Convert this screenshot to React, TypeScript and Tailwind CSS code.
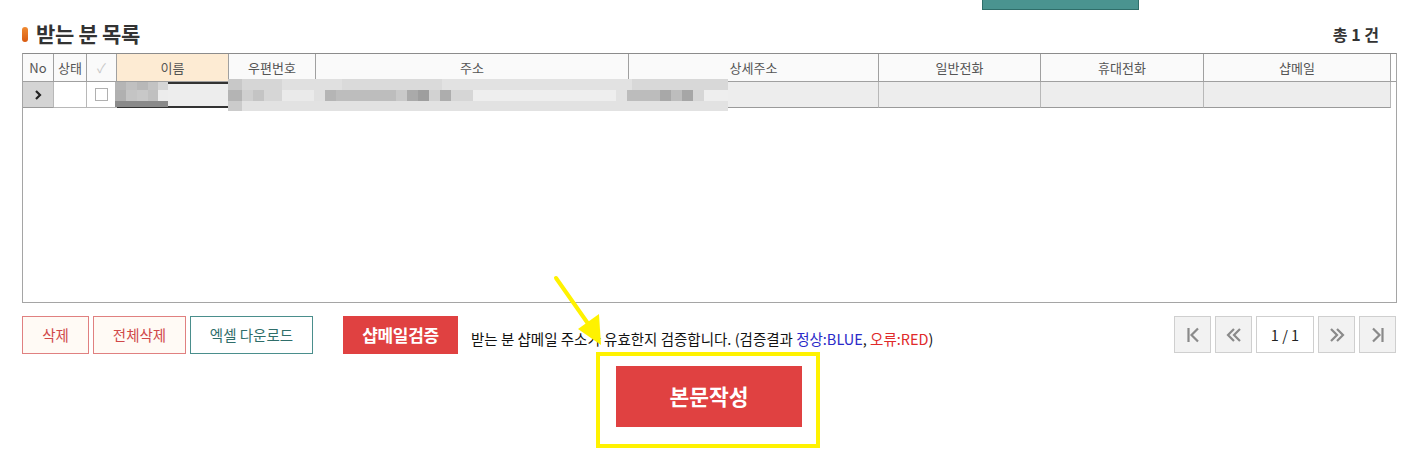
import React from "react";

const cols = [
  { w: 31, label: "No" },
  { w: 33, label: "상태" },
  { w: 30, label: "✓" },
  { w: 112, label: "이름" },
  { w: 87, label: "우편번호" },
  { w: 313, label: "주소" },
  { w: 250, label: "상세주소" },
  { w: 162, label: "일반전화" },
  { w: 163, label: "휴대전화" },
  { w: 187, label: "샵메일" },
];

function PagerBtn({ children, w = 37 }: { children: React.ReactNode; w?: number }) {
  return (
    <div
      className="h-[37px] flex items-center justify-center border border-[#cfcfcf] bg-[#f2f2f2] text-[#8a8a8a]"
      style={{ width: w }}
    >
      {children}
    </div>
  );
}

export default function App() {
  const font = { fontFamily: '"Noto Sans CJK KR", "Noto Sans", sans-serif' };
  return (
    <div className="relative w-[1426px] h-[459px] bg-white overflow-hidden" style={font}>
      {/* top partial teal button */}
      <div className="pl-[982px] h-[10px]">
        <div className="w-[157px] h-[10px] bg-[#4a9490] border border-t-0 border-[#2f6e6a]" />
      </div>

      <div className="pl-[22px] w-[1397px]">
        {/* title row */}
        <div className="h-[43px] flex items-center justify-between">
          <div className="flex items-center gap-[8px] pt-[5px]">
            <div className="w-[6px] h-[15px] rounded-full bg-gradient-to-b from-[#f08a30] to-[#d85a10]" />
            <span className="text-[21px] font-bold text-[#333] tracking-[-0.3px]">받는 분 목록</span>
          </div>
          <div className="pr-[18px] pt-[5px] text-[16px] font-bold text-[#333]">총 1 건</div>
        </div>

        {/* grid */}
        <div className="h-[250px] border border-[#a5a5a5] border-t-[#8c8c8c] flex flex-col">
          {/* header */}
          <div className="flex h-[28px] border-b border-[#a0a0a0]">
            {cols.map((c, i) => (
              <div
                key={i}
                className={`flex items-center justify-center text-[13px] border-r border-[#a0a0a0] ${
                  i === 3 ? "bg-[#fdebd3]" : "bg-[#fafafa]"
                } ${i === 2 ? "text-[#c8c8c8]" : "text-[#555]"}`}
                style={{ width: c.w }}
              >
                {c.label}
              </div>
            ))}
          </div>
          {/* row */}
          <div className="relative flex h-[26px]">
            {cols.map((c, i) => (
              <div
                key={i}
                className={`flex items-center justify-center border-r border-b border-[#b8b8b8] ${
                  i === 0 ? "bg-[#d4d4d4] border-b-[#9a9a9a]" : i === 1 || i === 2 ? "bg-white" : "bg-[#ededed] border-b-[#9a9a9a]"
                } ${i === 3 ? "border-t-2 border-t-[#333] border-b-2 border-b-[#333]" : ""}`}
                style={{ width: c.w }}
              >
                {i === 0 && (
                  <svg width="10" height="12" viewBox="0 0 10 12">
                    <path d="M3 2 L7 6 L3 10" stroke="#222" strokeWidth="2.2" fill="none" />
                  </svg>
                )}
                {i === 2 && <div className="w-[13px] h-[13px] border border-[#b0b0b0] bg-white" />}
              </div>
            ))}
            {/* blurred name */}
            <div className="absolute left-[92px] top-0 w-[53px] h-[25px] flex flex-col">
              <div className="flex h-[8px]">
                <div className="w-[11px] bg-[#b5b5b5]" />
                <div className="w-[11px] bg-[#c0c0c0]" />
                <div className="w-[11px] bg-[#b8b8b8]" />
                <div className="w-[10px] bg-[#c3c3c3]" />
                <div className="w-[10px] bg-[#d5d5d5]" />
              </div>
              <div className="flex h-[11px]">
                <div className="w-[11px] bg-[#b0b0b0]" />
                <div className="w-[11px] bg-[#c4c4c4]" />
                <div className="w-[11px] bg-[#c8c8c8]" />
                <div className="w-[10px] bg-[#c0c0c0]" />
                <div className="w-[10px] bg-[#ececec]" />
              </div>
              <div className="h-[6px] bg-[#8a8a8a]" />
            </div>
            {/* blurred address */}
            <div className="absolute left-[205px] -top-[3px] w-[500px] h-[32px] flex flex-col">
              <div className="flex h-[11px] bg-[#dedede]">
                <div className="w-[14px] bg-[#c8c8c8]" />
                <div className="w-[40px] bg-[#d6d6d6]" />
                <div className="w-[60px] bg-[#e0e0e0]" />
                <div className="w-[100px] bg-[#dadada]" />
                <div className="w-[190px] bg-[#e2e2e2]" />
                <div className="w-[96px] bg-[#d8d8d8]" />
              </div>
              <div className="flex h-[11px] bg-[#eeeeee]">
                <div className="w-[14px] bg-[#b4b4b4]" />
                <div className="w-[11px] bg-[#cfcfcf]" />
                <div className="w-[11px] bg-[#c4c4c4]" />
                <div className="w-[18px] bg-[#d6d6d6]" />
                <div className="w-[32px] bg-[#eaeaea]" />
                <div className="w-[11px] bg-[#e0e0e0]" />
                <div className="w-[11px] bg-[#b5b5b5]" />
                <div className="w-[60px] bg-[#bdbdbd]" />
                <div className="w-[11px] bg-[#c9c9c9]" />
                <div className="w-[11px] bg-[#aaaaaa]" />
                <div className="w-[11px] bg-[#9e9e9e]" />
                <div className="w-[11px] bg-[#d2d2d2]" />
                <div className="w-[11px] bg-[#adadad]" />
                <div className="w-[22px] bg-[#d6d6d6]" />
                <div className="w-[143px] bg-[#eeeeee]" />
                <div className="w-[11px] bg-[#e2e2e2]" />
                <div className="w-[33px] bg-[#bcbcbc]" />
                <div className="w-[11px] bg-[#a8a8a8]" />
                <div className="w-[11px] bg-[#bdbdbd]" />
                <div className="w-[11px] bg-[#a6a6a6]" />
                <div className="w-[11px] bg-[#d6d6d6]" />
              </div>
              <div className="flex h-[10px] bg-[#e2e2e2]">
                <div className="w-[14px] bg-[#cbcbcb]" />
              </div>
            </div>
          </div>
          <div className="flex-1 bg-white" />
        </div>

        {/* action row */}
        <div className="mt-[13px] flex items-start h-[38px]">
          <div className="w-[67px] h-[38px] border border-[#e08080] bg-[#fffaf5] text-[#d04848] text-[14.5px] flex items-center justify-center">
            삭제
          </div>
          <div className="ml-[4px] w-[93px] h-[38px] border border-[#e08080] bg-[#fffaf5] text-[#d04848] text-[14.5px] flex items-center justify-center">
            전체삭제
          </div>
          <div className="ml-[4px] w-[123px] h-[38px] border border-[#4a8e8c] bg-white text-[#2f6e6a] text-[14.5px] flex items-center justify-center">
            엑셀 다운로드
          </div>
          <div className="ml-[30px] w-[115px] h-[38px] bg-[#e04141] text-white text-[17px] font-bold flex items-center justify-center tracking-[-0.3px]">
            샵메일검증
          </div>
          <div className="ml-[13px] pt-[12px] text-[14.5px] text-[#111]">
            받는 분 샵메일 주소가 유효한지 검증합니다. (검증결과 <span className="text-[#2a2ac8]">정상:BLUE</span>,{" "}
            <span className="text-[#e02a2a]">오류:RED</span>)
          </div>
          <div className="ml-auto flex gap-[4px] pr-[1px]">
            <PagerBtn>
              <svg width="16" height="18" viewBox="0 0 16 18">
                <path d="M3.5 2 V16 M13 2.5 L6.5 9 L13 15.5" stroke="#8a8a8a" strokeWidth="2.2" fill="none" />
              </svg>
            </PagerBtn>
            <PagerBtn>
              <svg width="20" height="18" viewBox="0 0 20 18">
                <path d="M10 3 L4 9 L10 15 M16 3 L10 9 L16 15" stroke="#8a8a8a" strokeWidth="2.2" fill="none" />
              </svg>
            </PagerBtn>
            <div className="w-[58px] h-[37px] border border-[#cfcfcf] bg-white flex items-center justify-center text-[14.5px] text-[#222]">
              1 / 1
            </div>
            <PagerBtn>
              <svg width="20" height="18" viewBox="0 0 20 18">
                <path d="M4 3 L10 9 L4 15 M10 3 L16 9 L10 15" stroke="#8a8a8a" strokeWidth="2.2" fill="none" />
              </svg>
            </PagerBtn>
            <PagerBtn>
              <svg width="16" height="18" viewBox="0 0 16 18">
                <path d="M3 2.5 L9.5 9 L3 15.5 M12.5 2 V16" stroke="#8a8a8a" strokeWidth="2.2" fill="none" />
              </svg>
            </PagerBtn>
          </div>
        </div>
      </div>

      {/* main button with highlight box */}
      <div className="-mt-[2px] pl-[596px]">
        <div className="w-[224px] h-[96px] border-[4px] border-[#fff200] pl-[16px] pt-[10px]">
          <div className="w-[186px] h-[61px] bg-[#e04141] text-white text-[21.5px] font-bold flex items-center justify-center">
            본문작성
          </div>
        </div>
      </div>

      {/* annotation arrow */}
      <svg className="absolute left-0 top-0 pointer-events-none" width="1426" height="459">
        <line x1="556" y1="278" x2="589" y2="325" stroke="#fff200" strokeWidth="4" strokeLinecap="round" />
        <polygon points="601,345 578,329 599,314" fill="#fff200" />
      </svg>
    </div>
  );
}
